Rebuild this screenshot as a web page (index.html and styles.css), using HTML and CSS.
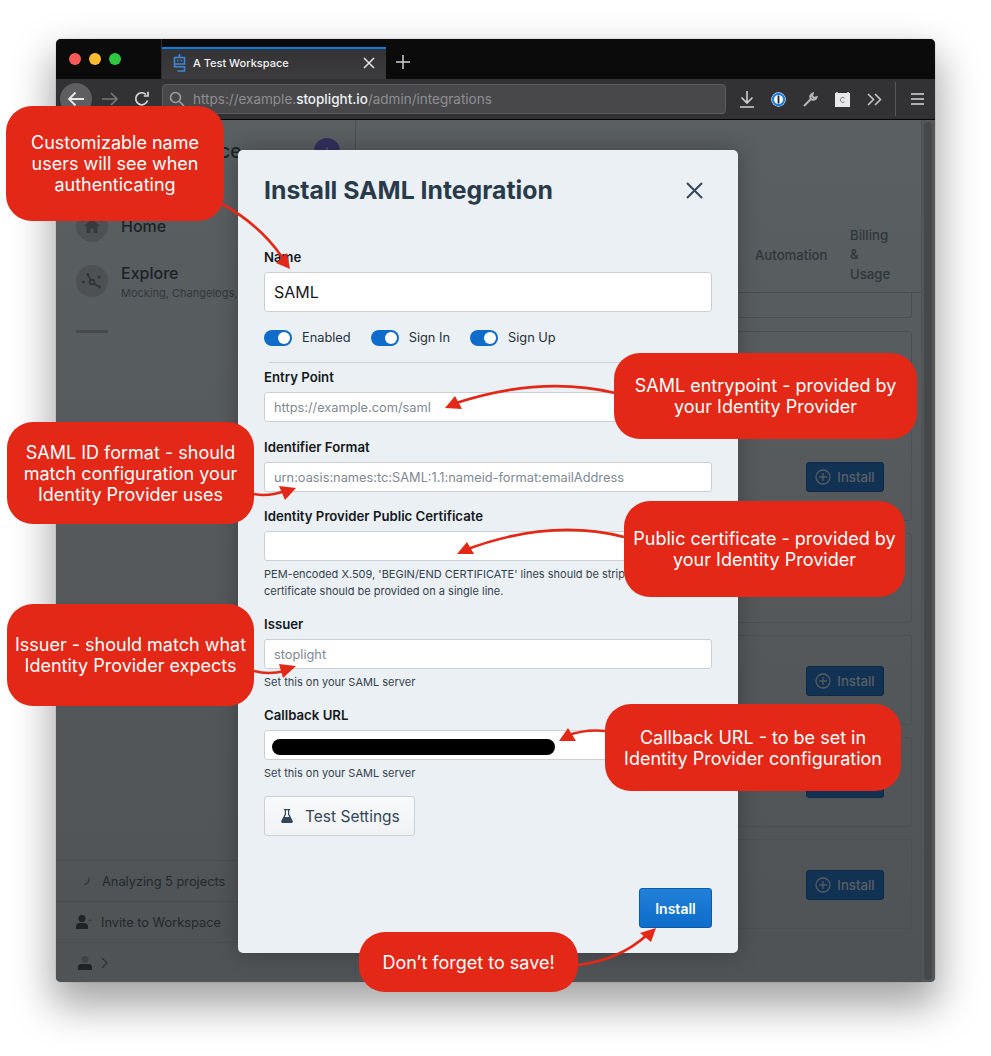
FILE: index.html
```html
<!DOCTYPE html>
<html lang="en">
<head>
<meta charset="utf-8">
<title>Install SAML Integration</title>
<link rel="stylesheet" href="styles.css">
</head>
<body>
<div class="stage">
  <div class="window">
    <header class="titlebar">
      <div class="lights"><span class="light red"></span><span class="light yellow"></span><span class="light green"></span></div>
      <div class="tab">
        <svg class="tab-icon" width="13" height="18" viewBox="0 0 13 18" fill="none" stroke="#3f86d8" stroke-width="1.600"><path d="M6.500 0v3M1.500 3.500h10v6.500h-10zM1.500 10v2.800h10V17h-7"/><path d="M4 6.700h1.400M7.600 6.700H9" stroke-width="1.800"/></svg>
        <span class="tab-title">A Test Workspace</span>
        <svg class="tab-close" width="12" height="12" viewBox="0 0 12 12" stroke="#e6e6e6" stroke-width="1.500"><path d="M1 1l10 10M11 1L1 11"/></svg>
      </div>
      <svg class="new-tab" width="14" height="14" viewBox="0 0 14 14" stroke="#cfcfcf" stroke-width="1.500"><path d="M7 0v14M0 7h14"/></svg>
    </header>
    <nav class="toolbar">
      <div class="back"><svg width="18" height="16" viewBox="0 0 18 16" fill="none" stroke="#e8e8e8" stroke-width="1.800"><path d="M17 8H2M8.500 1.500L2 8l6.500 6.500"/></svg></div>
      <svg class="forward" width="16" height="14" viewBox="0 0 16 14" fill="none" stroke="#77777a" stroke-width="1.600"><path d="M0 7h15M9 1l6 6-6 6"/></svg>
      <svg class="reload" width="16" height="16" viewBox="0 0 16 16" fill="none" stroke="#d8d8d8" stroke-width="1.700"><path d="M13.500 9.500A6 6 0 1 1 12 3.500M14 .8v4.200h-4.200"/></svg>
      <div class="urlbar">
        <svg width="16" height="16" viewBox="0 0 16 16" fill="none" stroke="#a0a0a2" stroke-width="1.600"><circle cx="6.500" cy="6.500" r="5"/><path d="M10.200 10.200L15 15"/></svg>
        <span class="url">https://example.<b>stoplight.io</b>/admin/integrations</span>
      </div>
      <div class="tools">
        <svg width="14" height="17" viewBox="0 0 14 17" fill="none" stroke="#cfcfcf" stroke-width="1.600"><path d="M7 0v11M1.500 6.500L7 12l5.500-5.500M0 16h14"/></svg>
        <svg width="15" height="15" viewBox="0 0 15 15"><circle cx="7.500" cy="7.500" r="7.200" fill="#fff"/><circle cx="7.500" cy="7.500" r="5.600" fill="none" stroke="#1a7fe8" stroke-width="2.200"/><rect x="6.600" y="3.500" width="1.800" height="8" fill="#222"/></svg>
        <svg width="15" height="15" viewBox="0 0 15 15" fill="none" stroke="#b5b5b5" stroke-width="2"><path d="M1 14l7-7M8 7a3.500 3.500 0 0 1 1-5.200l.7-.3L9 4l2 2 2.600-.8A3.500 3.500 0 0 1 8 7z"/></svg>
        <svg width="15" height="15" viewBox="0 0 15 15"><rect y="1" width="15" height="14" fill="#e8e8e8"/><path d="M2 0v2M13 0v2" stroke="#e8e8e8" stroke-width="1.500"/><path d="M9.500 6a2.500 2.500 0 1 0 0 3.800" fill="none" stroke="#777" stroke-width="1"/></svg>
        <svg width="15" height="13" viewBox="0 0 15 13" fill="none" stroke="#c4c4c4" stroke-width="1.600"><path d="M1 1l5.500 5.500L1 12M8 1l5.500 5.500L8 12"/></svg>
      </div>
      <svg class="menu" width="13" height="12" viewBox="0 0 13 12" stroke="#d8d8d8" stroke-width="1.600"><path d="M0 1h13M0 6h13M0 11h13"/></svg>
    </nav>
    <main class="app">
      <aside class="sidebar">
        <div class="workspace"><span class="workspace-name">A Test Workspace</span><span class="add-btn">+</span></div>
        <div class="nav-item home">
          <span class="nav-circle"><svg width="16" height="14" viewBox="0 0 16 14" fill="#363a3d"><path d="M8 0L0 7h2.500v7h4V9.500h3V14h4V7H16z"/></svg></span>
          <span class="nav-title">Home</span>
        </div>
        <div class="nav-item explore">
          <span class="nav-circle"><svg width="20" height="20" viewBox="0 0 20 20" fill="none" stroke="#2f3336" stroke-width="1.600"><path d="M6 3.500l2.500 5.500M12 12.500l5.500 3.500"/><circle cx="10" cy="11" r="2.400"/><circle cx="6" cy="3.500" r=".6"/><circle cx="17.500" cy="16" r=".6"/><circle cx="1.500" cy="11" r=".7"/><circle cx="17" cy="6" r=".7"/></svg></span>
          <div class="nav-text"><div class="nav-title">Explore</div><div class="nav-sub">Mocking, Changelogs,</div></div>
        </div>
        <div class="nav-rule"></div>
        <div class="side-footer">
          <div class="foot-row"><svg class="foot-icon" width="16" height="14" viewBox="0 0 16 14" fill="none" stroke="#363a3d" stroke-width="1.300"><path d="M13 3.500c.4 4-1.500 6.500-5 7"/></svg><span class="foot-text">Analyzing 5 projects</span></div>
          <div class="foot-row"><svg class="foot-icon" width="16" height="14" viewBox="0 0 16 14" fill="#1f2427"><circle cx="6" cy="3.500" r="3.500"/><path d="M0 14v-2.500A3.500 3.500 0 0 1 3.500 8h5a3.500 3.500 0 0 1 3.500 3.500V14z"/><path d="M14 3.500v4M12 5.500h4" stroke="#3c4043" stroke-width="1"/></svg><span>Invite to Workspace</span></div>
          <div class="foot-row user"><svg width="14" height="14" viewBox="0 0 14 14"><circle cx="7" cy="3.500" r="3.500" fill="#3f4447"/><path d="M0 14v-2.500A3.500 3.500 0 0 1 3.500 8h7a3.500 3.500 0 0 1 3.500 3.500V14z" fill="#1f2427"/></svg><svg width="7" height="12" viewBox="0 0 7 12" fill="none" stroke="#2b3033" stroke-width="1.200"><path d="M1 1l5 5-5 5"/></svg></div>
        </div>
      </aside>
      <section class="content">
        <div class="tabs">
          <span class="tab-link">Automation</span>
          <span class="tab-link billing">Billing<br>&amp;<br>Usage</span>
        </div>
        <div class="cards">
          <div class="card stub"></div>
          <div class="card"><span class="install-dim"></span></div>
          <div class="card"><span class="install-dim"><svg width="16" height="16" viewBox="0 0 16 16" fill="none" stroke="#565c60" stroke-width="1.300"><circle cx="8" cy="8" r="7"/><path d="M8 4v8M4 8h8"/></svg>Install</span></div>
          <div class="card"><span class="install-dim"></span></div>
          <div class="card"><span class="install-dim"><svg width="16" height="16" viewBox="0 0 16 16" fill="none" stroke="#565c60" stroke-width="1.300"><circle cx="8" cy="8" r="7"/><path d="M8 4v8M4 8h8"/></svg>Install</span></div>
          <div class="card"><span class="install-dim"></span></div>
          <div class="card"><span class="install-dim"><svg width="16" height="16" viewBox="0 0 16 16" fill="none" stroke="#565c60" stroke-width="1.300"><circle cx="8" cy="8" r="7"/><path d="M8 4v8M4 8h8"/></svg>Install</span></div>
        </div>
      </section>
      <div class="scrollbar"><div class="thumb"></div></div>
    </main>
  </div>

  <div class="modal">
    <div class="modal-head">
      <h1>Install SAML Integration</h1>
      <svg width="17" height="17" viewBox="0 0 17 17" stroke="#33475a" stroke-width="2"><path d="M1 1l15 15M16 1L1 16"/></svg>
    </div>
    <label class="label first">Name</label>
    <div class="input large">SAML</div>
    <div class="toggles">
      <span class="toggle"><i class="switch"></i>Enabled</span>
      <span class="toggle"><i class="switch"></i>Sign In</span>
      <span class="toggle"><i class="switch"></i>Sign Up</span>
    </div>
    <div class="divider"></div>
    <label class="label">Entry Point</label>
    <div class="input ph">https://example.com/saml</div>
    <label class="label gap">Identifier Format</label>
    <div class="input ph">urn:oasis:names:tc:SAML:1.1:nameid-format:emailAddress</div>
    <label class="label gap2">Identity Provider Public Certificate</label>
    <div class="input"></div>
    <p class="help">PEM-encoded X.509, 'BEGIN/END CERTIFICATE' lines should be stripped and the<br>certificate should be provided on a single line.</p>
    <label class="label spaced">Issuer</label>
    <div class="input ph">stoplight</div>
    <p class="help">Set this on your SAML server</p>
    <label class="label spaced">Callback URL</label>
    <div class="input"><span class="redact"></span></div>
    <p class="help">Set this on your SAML server</p>
    <div class="test-btn"><svg width="12" height="14" viewBox="0 0 12 14" fill="#33475a"><path d="M3 0h6v1.200H8.200V5L12 12.500 11 14H1L0 12.500 3.800 5V1.200H3zM5 1.200v4.200L3.700 8h4.600L7 5.400V1.200z"/></svg>Test Settings</div>
    <div class="modal-foot"><span class="install-btn">Install</span></div>
  </div>

  <svg class="arrows" width="991" height="1056" viewBox="0 0 991 1056" fill="none" stroke="#e32817" stroke-width="2.600">
    <path d="M222 204Q262 226 284 260"/>
    <path fill="#e32817" stroke="none" d="M290 269L276 263L287 253z"/>
    <path d="M615 393Q540 375 453 404"/>
    <path fill="#e32817" stroke="none" d="M445 408L455 396L462 409z"/>
    <path d="M254 494Q268 497 285 491"/>
    <path fill="#e32817" stroke="none" d="M296 488L279 486L285 500z"/>
    <path d="M624 537Q550 518 465 550"/>
    <path fill="#e32817" stroke="none" d="M457 554L467 542L474 554z"/>
    <path d="M254 671Q268 675 285 671"/>
    <path fill="#e32817" stroke="none" d="M296 666L279 664L283 678z"/>
    <path d="M605 731Q585 729 566 736"/>
    <path fill="#e32817" stroke="none" d="M559 741L568 728L576 741z"/>
    <path d="M578 965Q620 960 648 934"/>
    <path fill="#e32817" stroke="none" d="M656 928L640 933L651 942z"/>
  </svg>

  <div class="callout c1">Customizable name<br>users will see when<br>authenticating</div>
  <div class="callout c2">SAML entrypoint - provided by<br>your Identity Provider</div>
  <div class="callout c3">SAML ID format - should<br>match configuration your<br>Identity Provider uses</div>
  <div class="callout c4">Public certificate - provided by<br>your Identity Provider</div>
  <div class="callout c5">Issuer - should match what<br>Identity Provider expects</div>
  <div class="callout c6">Callback URL - to be set in<br>Identity Provider configuration</div>
  <div class="callout c7">Don’t forget to save!</div>
</div>
</body>
</html>
```

FILE: styles.css
```css
* { box-sizing: border-box; }
html, body { margin: 0; padding: 0; background: #fff; }
body { font-family: Inter, "Liberation Sans", sans-serif; overflow: hidden; }
.stage { position: relative; width: 991px; height: 1056px; padding: 39px 56px 74px; }

/* browser window */
.window {
  width: 879px; height: 943px; display: flex; flex-direction: column;
  border-radius: 5px; overflow: hidden; background: #55595c;
  box-shadow: 0 0 1px rgba(0,0,0,.5), 0 20px 40px 4px rgba(0,0,0,.36);
}
.titlebar { height: 40px; flex: none; background: #0b0b0c; display: flex; align-items: flex-end; }
.lights { width: 106px; height: 40px; padding: 14px 0 0 13px; display: flex; gap: 8px; border-right: 1px solid #2e2e30; }
.light { width: 12px; height: 12px; border-radius: 50%; }
.red { background: #f95a57; } .yellow { background: #fdbb2f; } .green { background: #2dc840; }
.tab {
  width: 224px; height: 32px; padding: 0 11px 2px; display: flex; align-items: center;
  background: linear-gradient(#333336, #3c3c3f); border-top: 2px solid #0a7ce8;
}
.tab-icon { flex: none; margin-right: 7px; }
.tab-title { color: #f2f2f2; font-size: 11px; font-weight: 500; flex: 1; }
.tab-close { flex: none; }
.new-tab { align-self: center; margin: 5px 0 0 10px; }

.toolbar {
  height: 41px; flex: none; background: #323234; border-bottom: 1px solid #050505;
  display: flex; align-items: center; padding: 0 0 0 4px;
}
.back { width: 32px; height: 32px; border-radius: 50%; background: #5e5e61; display: flex; align-items: center; justify-content: center; flex: none; }
.forward { margin-left: 10px; flex: none; }
.reload { margin-left: 16px; flex: none; }
.urlbar {
  width: 564px; height: 30px; margin-left: 12px; background: #48484a; border: 1px solid #5c5c5e; border-radius: 4px;
  display: flex; align-items: center; padding-left: 6px; gap: 8px; flex: none;
}
.url { font-size: 13.500px; color: #8f8f91; white-space: nowrap; }
.url b { color: #f0f0f0; font-weight: 500; }
.tools { display: flex; align-items: center; gap: 17px; margin-left: 14px; height: 34px; border-right: 1px solid #57575a; width: 156px; flex: none; }
.menu { margin-left: 15px; flex: none; }

.app { flex: 1; display: flex; min-height: 0; background: linear-gradient(#5a5f62, #4f5356); }
.sidebar { width: 300px; flex: none; border-right: 1px solid #4a4e51; display: flex; flex-direction: column; }
.workspace { display: flex; justify-content: space-between; align-items: center; padding: 17px 15px 0 20px; height: 44px; color: #1c2226; font-size: 19px; font-weight: 500; }
.workspace-name { white-space: nowrap; padding-top: 2px; }
.add-btn { width: 26px; height: 26px; border-radius: 50%; background: #33305e; color: #55596a; display: flex; align-items: center; justify-content: center; font-size: 20px; flex: none; }
.nav-item { display: flex; align-items: center; gap: 13px; padding-left: 20px; color: #1c2226; flex: none; }
.home { margin-top: 46px; height: 32px; }
.explore { margin-top: 23px; height: 32px; }
.nav-circle { width: 32px; height: 32px; border-radius: 50%; background: #4d5154; display: flex; align-items: center; justify-content: center; flex: none; }
.nav-title { font-size: 16px; font-weight: 500; line-height: 20px; }
.nav-text { padding-top: 2px; }
.nav-sub { font-size: 11px; line-height: 16px; margin-top: 2px; color: #33383b; white-space: nowrap; }
.nav-rule { width: 32px; height: 3px; background: #45494c; margin: 33px 0 0 20px; flex: none; }
.side-footer { margin-top: auto; }
.foot-row { height: 41px; border-top: 1px solid #4a4e51; display: flex; align-items: center; padding-left: 20px; font-size: 12.800px; color: #23282b; gap: 9px; }
.foot-row:last-child { height: 40px; }
.foot-icon { flex: none; }
.foot-text { margin-left: 1px; }
.user { padding-left: 22px; }

.content { flex: 1; min-width: 0; }
.tabs { height: 173px; border-bottom: 1px solid #4a4e51; position: relative; color: #2f363b; font-size: 13.200px; font-weight: 500; }
.tab-link { position: absolute; left: 399px; bottom: 29px; }
.tab-link.billing { left: 494px; bottom: 8px; line-height: 19.500px; }
.cards { display: flex; flex-direction: column; gap: 12px; margin-right: 9px; }
.card { height: 90px; border: 1px solid #4c5053; border-radius: 3px; margin-left: 12px; display: flex; align-items: center; justify-content: flex-end; padding: 2px 27px 0 0; flex: none; }
.stub { height: 25px; border-top: 0; border-radius: 0 0 3px 3px; margin-bottom: 1px; }
.stub + .card { height: 88px; }
.install-dim { width: 78px; height: 30px; border-radius: 3px; background: #123253; border: 1px solid #0f2a46; color: #5a6066; font-size: 13.200px; font-weight: 500; display: flex; align-items: center; justify-content: center; gap: 6px; }
.scrollbar { width: 14px; flex: none; border-left: 1px solid #4e5255; background: #53575a; padding: 2px 3px 2px 2px; }
.thumb { height: 100%; border-radius: 4px; background: #46494c; }

/* modal */
.modal {
  position: absolute; left: 238px; top: 150px; width: 500px; height: 803px;
  background: #ebf0f4; border-radius: 5px; padding: 0 26px; display: flex; flex-direction: column;
  box-shadow: 0 0 22px rgba(0,0,0,.28);
}
.modal-head { height: 80px; display: flex; justify-content: space-between; align-items: center; padding-right: 9px; color: #293a4a; flex: none; }
.modal-head h1 { margin: 0; font-size: 24.800px; font-weight: 700; }
.label { display: block; font-size: 13.200px; font-weight: 600; line-height: 16px; color: #14191d; flex: none; margin-bottom: 7px; }
.first { margin-top: 19px; }
.input { height: 30px; background: #fff; border: 1px solid #cdd0d3; border-radius: 3px; font-size: 12.800px; line-height: 29px; padding-left: 9px; color: #14191d; flex: none; white-space: nowrap; overflow: hidden; position: relative; }
.input.large { height: 40px; font-size: 16px; line-height: 38px; }
.ph { color: #7f8993; }
.toggles { display: flex; gap: 20px; margin-top: 17px; height: 17px; align-items: center; flex: none; }
.toggle { display: flex; align-items: center; gap: 10px; font-size: 12.800px; color: #22303c; }
.switch { display: block; width: 28px; height: 16px; border-radius: 8px; background: #0f6ccb; position: relative; }
.switch::after { content: ""; position: absolute; right: 2px; top: 2px; width: 12px; height: 12px; border-radius: 50%; background: #fff; }
.divider { height: 1px; background: #cdd2d6; margin: 16px 0 0 5px; flex: none; }
.divider + .label { margin-top: 6px; }
.gap { margin-top: 17px; }
.gap2 { margin-top: 16px; }
.help { margin: 5px 0 0; font-size: 11px; line-height: 17px; color: #33414d; flex: none; white-space: nowrap; }
.spaced { margin-top: 16px; }
.redact { position: absolute; left: 7px; top: 8px; width: 283px; height: 16px; border-radius: 8px; background: #000; }
.test-btn { width: 151px; height: 40px; margin-top: 14px; border: 1px solid #cdd0d3; border-radius: 3px; background: linear-gradient(#f8f9fa, #f0f2f4); display: flex; align-items: center; gap: 12px; padding-left: 16px; font-size: 15.500px; color: #33475a; flex: none; }
.modal-foot { margin-top: auto; padding-bottom: 25px; display: flex; justify-content: flex-end; }
.install-btn { width: 73px; height: 40px; border-radius: 3px; background: linear-gradient(#2180d8, #0e6ccb); border: 1px solid #0d5ba8; color: #fff; font-size: 14px; font-weight: 600; display: flex; align-items: center; justify-content: center; }

/* annotations */
.arrows { position: absolute; left: 0; top: 0; pointer-events: none; }
.callout { position: absolute; background: #e32817; color: #fff; border-radius: 26px; font-size: 18px; line-height: 21px; text-align: center; display: flex; align-items: center; justify-content: center; white-space: nowrap; }
.c1 { left: 6px; top: 106px; width: 218px; height: 115px; }
.c2 { left: 614px; top: 353px; width: 303px; height: 86px; }
.c3 { left: 7px; top: 422px; width: 247px; height: 102px; }
.c4 { left: 624px; top: 501px; width: 281px; height: 96px; }
.c5 { left: 7px; top: 604px; width: 247px; height: 102px; }
.c6 { left: 605px; top: 704px; width: 296px; height: 87px; }
.c7 { left: 359px; top: 932px; width: 219px; height: 60px; }
```
